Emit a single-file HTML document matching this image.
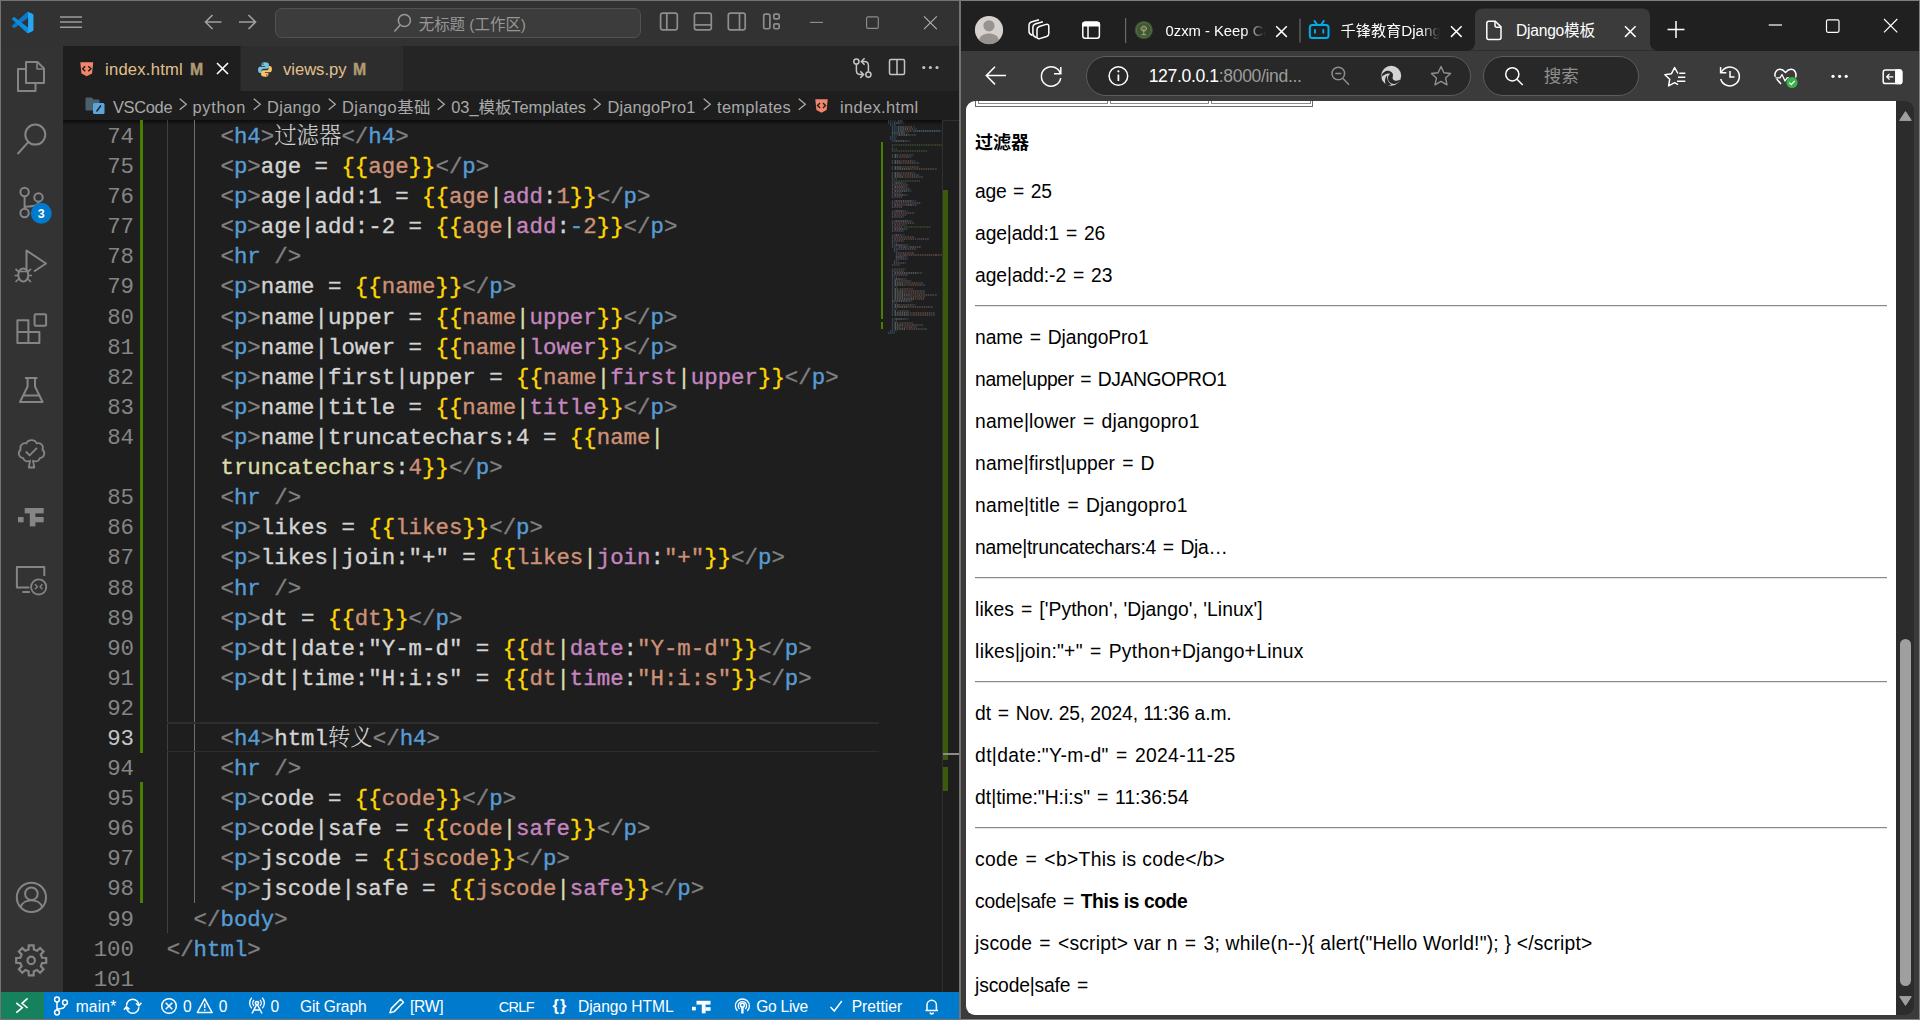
<!DOCTYPE html><html lang="zh-CN"><head><meta charset="utf-8"><title>screenshot</title><style>
*{box-sizing:border-box;margin:0;padding:0}
html,body{width:1920px;height:1020px;overflow:hidden;background:#3b3b3b}
body{position:relative;font-family:"Liberation Sans","Noto Sans CJK SC",sans-serif;}
.abs{position:absolute}
svg{display:block;overflow:visible}
/* ---------- VS Code ---------- */
#vs{position:absolute;left:0;top:0;width:960px;height:1020px;background:#1e1e1e;overflow:hidden}
#vs-title{position:absolute;left:1px;top:1px;width:958px;height:45px;background:#323233}
#vs-act{position:absolute;left:1px;top:46px;width:62px;height:946px;background:#333333}
#vs-tabs{position:absolute;left:63px;top:46px;width:896px;height:45px;background:#252526}
.tab{position:absolute;top:0;height:45px;font-size:16.4px;line-height:47px;color:#e2c08d;white-space:nowrap}
#vs-bc{position:absolute;left:63px;top:91px;width:896px;height:29px;background:#1e1e1e;font-size:16.4px;color:#a9a9a9;white-space:nowrap}
#vs-bc span{position:absolute;top:0;line-height:32px}
#vs-bc .ch{color:#a9a9a9}
#vs-ed{position:absolute;left:63px;top:120px;width:896px;height:872px;background:#1e1e1e;overflow:hidden}
#vs-status{position:absolute;left:1px;top:992px;width:958px;height:27px;background:#007acc;color:#fff;font-size:15.6px;white-space:nowrap}
#vs-status span{position:absolute;top:0;line-height:30px}
.ln{position:absolute;left:0;width:71px;text-align:right;color:#858585;font-family:"Liberation Mono",monospace;white-space:pre}
.cl{position:absolute;white-space:pre;-webkit-text-stroke:0.35px;height:30.1px;font-family:"Liberation Mono","Noto Serif CJK SC",monospace;color:#d4d4d4}
.cj{font-family:"Liberation Mono","Noto Serif CJK SC",monospace;letter-spacing:0;line-height:0;-webkit-text-stroke:0;font-weight:300}
.g{color:#808080}.t{color:#569cd6}.y{color:#ffd700}.v{color:#ce9178}.pp{color:#dcdcaa}.f{color:#c586c0}.w{color:#d4d4d4}
/* ---------- Browser ---------- */
#br{position:absolute;left:961px;top:0;width:959px;height:1020px;background:#3b3b3b;overflow:hidden}
#br-strip{position:absolute;left:0;top:0;width:959px;height:50.6px;background:#202020}
#br-tool{position:absolute;left:0;top:50.6px;width:959px;height:50.4px;background:#3b3b3b}
#doc{position:absolute;left:5px;top:101px;width:930.4px;height:914px;background:#fff;border-radius:9px 0 0 9px;overflow:hidden;color:#000}
#sb{position:absolute;left:935.3px;top:101px;width:18.2px;height:914px;background:#2c2c2c;border-radius:0 9px 9px 0}
#doc p,#doc h4,#doc hr{position:absolute;left:9.1px;white-space:nowrap}
#doc p{font-size:19.3px;line-height:24px;height:24px}
#doc i.q{font-style:normal;margin:0 1.6px}
#doc h4{font-size:18px;line-height:24px;font-weight:bold;font-family:"Liberation Sans","Noto Sans CJK SC",sans-serif}
#doc hr{border:0;border-top:1px solid #8a8a8a;border-left:0;height:2px;width:911.5px;background:none;border-bottom:1px solid #e6e6e6}
</style></head><body>
<div id="vs">
<div class="abs" style="left:0;top:0;width:960px;height:1020px;background:#767272"></div>
<div id="vs-title"></div>
<div id="vs-act"></div>
<div id="vs-tabs"><div class="tab" style="left:0;width:177px;background:#1e1e1e"></div><div class="tab" style="left:178px;width:162px;background:#2d2d2d"></div><svg class="abs" style="left:16.7px;top:15.6px" width="13.51" height="14.475" viewBox="0 0 14 15"><path d="M0.300 0.200h13.400l-1.200 11.700l-5.500 2.900l-5.500-2.900z" fill="#f1866a"/><path d="M5.400 4.300l-2.700 2.700l2.700 2.700M8.600 4.300l2.700 2.700l-2.700 2.700" fill="none" stroke="#1e1e1e" stroke-width="1.500"/></svg><div id="t1" class="tab" style="left:42px;letter-spacing:0.236px;font-size:16.6px">index.html</div><div id="t2" class="tab" style="left:127px;letter-spacing:0.328px;font-size:15.8px;font-weight:bold;color:#b09a74;top:0px;-webkit-text-stroke:0.4px #b09a74">M</div><svg class="abs" style="left:153px;top:16px" width="13" height="13" viewBox="0 0 13 13"><path d="M1 1l11 11M12 1l-11 11" stroke="#fff" stroke-width="1.600" fill="none"/></svg><svg class="abs" style="left:194.5px;top:16px" width="14" height="15" viewBox="0 0 14 15"><path d="M6.900 0.300c-3 0-3.300 1.200-3.300 2.200v1.600h3.500v0.700h-5c-1.600 0-2 1.600-2 3.200s0.500 3 1.900 3h1.300v-1.900c0-1.500 1.100-2.400 2.400-2.400h3.200c1.200 0 2-0.900 2-2v-2.300c0-1.300-1.300-2.100-4-2.100z" fill="#72c4ea"/><path d="M7.100 14.700c3 0 3.300-1.200 3.300-2.200v-1.600h-3.500v-0.700h5c1.600 0 2-1.600 2-3.200s-0.500-3-1.900-3h-1.300v1.900c0 1.500-1.100 2.400-2.400 2.400h-3.200c-1.200 0-2 0.900-2 2v2.300c0 1.300 1.300 2.100 4 2.100z" fill="#f6c66c"/><circle cx="5.100" cy="2" r="0.650" fill="#2d2d2d"/><circle cx="8.900" cy="13" r="0.650" fill="#2d2d2d"/></svg><div id="t3" class="tab" style="left:220px;letter-spacing:-0.018px;font-size:16.6px">views.py</div><div id="t4" class="tab" style="left:290px;letter-spacing:0.328px;font-size:15.8px;font-weight:bold;color:#b09a74;top:0px;-webkit-text-stroke:0.4px #b09a74">M</div><svg class="abs" style="left:0;top:0" width="896" height="45" viewBox="63 46 896 45"><g fill="none" stroke="#c5c5c5" stroke-width="1.500"><circle cx="856.400" cy="61.500" r="2.600"/><circle cx="868.400" cy="74.600" r="2.600"/><path d="M856.400 64.300v6.300c0 3 1.500 4 4 4h3M860.300 71.300l3.300 3.300l-3.300 3.300"/><path d="M868.400 71.800v-6.300c0-3-1.500-4-4-4h-3M864.600 64.800l-3.300-3.300l3.300-3.300"/><rect x="889.500" y="59.400" width="15" height="15" rx="1.500"/><path d="M897 59.400v15"/></g><g fill="#c5c5c5"><circle cx="923.800" cy="67.500" r="1.550"/><circle cx="930.400" cy="67.500" r="1.550"/><circle cx="937" cy="67.500" r="1.550"/></g></svg></div>
<div id="vs-bc"><svg class="abs" style="left:22px;top:6px" width="20" height="18" viewBox="0 0 20 18"><path d="M0.500 1.500a1 1 0 0 1 1-1h5l2 2h5a1 1 0 0 1 1 1v9a1 1 0 0 1-1 1h-12a1 1 0 0 1-1-1z" fill="#4a616c"/><rect x="8" y="6" width="11.500" height="11" rx="1.500" fill="#5aa6dc"/><path d="M11.500 14.500l4.500-6" stroke="#1e1e1e" stroke-width="1.400"/></svg><span id="b0"  style="left:50px;letter-spacing:-0.309px;">VSCode</span><span id="b1"  style="left:129.5px;letter-spacing:0.714px;">python</span><span id="b2"  style="left:204px;letter-spacing:0.341px;">Django</span><span id="b3"  style="left:279px;letter-spacing:0.533px;">Django基础</span><span id="b4"  style="left:388.2px;letter-spacing:-0.003px;">03_模板Templates</span><span id="b5"  style="left:544.5px;letter-spacing:0.142px;">DjangoPro1</span><span id="b6"  style="left:654px;letter-spacing:0.326px;">templates</span><span id="b7"  style="left:777px;letter-spacing:0.380px;">index.html</span><svg class="abs" style="left:115.75px;top:7.200px" width="9" height="14" viewBox="0 0 9 14"><path d="M0.700 0.700l6.600 5.550l-6.600 5.550" fill="none" stroke="#a9a9a9" stroke-width="1.300"/></svg><svg class="abs" style="left:189.9px;top:7.200px" width="9" height="14" viewBox="0 0 9 14"><path d="M0.700 0.700l6.600 5.550l-6.600 5.550" fill="none" stroke="#a9a9a9" stroke-width="1.300"/></svg><svg class="abs" style="left:264.9px;top:7.200px" width="9" height="14" viewBox="0 0 9 14"><path d="M0.700 0.700l6.600 5.550l-6.600 5.550" fill="none" stroke="#a9a9a9" stroke-width="1.300"/></svg><svg class="abs" style="left:374.1px;top:7.200px" width="9" height="14" viewBox="0 0 9 14"><path d="M0.700 0.700l6.600 5.550l-6.600 5.550" fill="none" stroke="#a9a9a9" stroke-width="1.300"/></svg><svg class="abs" style="left:529.9px;top:7.200px" width="9" height="14" viewBox="0 0 9 14"><path d="M0.700 0.700l6.600 5.550l-6.600 5.550" fill="none" stroke="#a9a9a9" stroke-width="1.300"/></svg><svg class="abs" style="left:639.9px;top:7.200px" width="9" height="14" viewBox="0 0 9 14"><path d="M0.700 0.700l6.600 5.550l-6.600 5.550" fill="none" stroke="#a9a9a9" stroke-width="1.300"/></svg><svg class="abs" style="left:735.3px;top:7.200px" width="9" height="14" viewBox="0 0 9 14"><path d="M0.700 0.700l6.600 5.550l-6.600 5.550" fill="none" stroke="#a9a9a9" stroke-width="1.300"/></svg><svg class="abs" style="left:752px;top:7.5px" width="13.02" height="13.95" viewBox="0 0 14 15"><path d="M0.300 0.200h13.400l-1.200 11.700l-5.500 2.900l-5.500-2.900z" fill="#f1866a"/><path d="M5.400 4.300l-2.700 2.700l2.700 2.700M8.600 4.300l2.700 2.700l-2.700 2.700" fill="none" stroke="#1e1e1e" stroke-width="1.500"/></svg></div>
<div id="vs-ed" style="font-size:22.400px;line-height:30.100px"><div class="abs" style="left:0;top:0;width:879px;height:5px;background:linear-gradient(#0c0c0c,rgba(12,12,12,0))"></div><div class="abs" style="left:77px;top:0px;width:3px;height:633px;background:#487e02"></div><div class="abs" style="left:77px;top:662.2px;width:3px;height:120.4px;background:#487e02"></div><div class="abs" style="left:104px;top:0px;width:1px;height:813px;background:#404040"></div><div class="abs" style="left:131px;top:0px;width:1px;height:783px;background:#707070"></div><div class="abs" style="left:104px;top:602.4px;width:712px;height:1.5px;background:#2d2d2d"></div><div class="abs" style="left:104px;top:630.6px;width:712px;height:1.5px;background:#2d2d2d"></div><div class="abs" style="left:818px;top:22px;width:2.4px;height:177px;background:#487e02"></div><div class="abs" style="left:818px;top:202px;width:2.4px;height:7px;background:#487e02"></div><div class="abs" style="left:879px;top:0px;width:1px;height:872px;background:#303030"></div><div class="abs" style="left:879px;top:0px;width:17px;height:1px;background:#303030"></div><div class="abs" style="left:880px;top:69.5px;width:4.8px;height:570px;background:#3a5a0c"></div><div class="abs" style="left:880px;top:646.7px;width:4.8px;height:24.7px;background:#3a5a0c"></div><div class="abs" style="left:880px;top:633px;width:15.5px;height:1.6px;background:#8c8c8c"></div><svg class="abs" style="left:825px;top:0px;overflow:hidden" width="53.5" height="225" viewBox="0 0 53.5 225" fill="none" stroke-width="1.150" stroke-dasharray="1.100 0.700" opacity="0.600"><path stroke="#569cd6" d="M0.0 1.0h8.6M0.0 3.0h4.7M2.0 5.0h4.7M3.9 7.0h4.7M3.9 9.0h4.7M3.9 11.0h4.7M3.9 15.0h5.7M20.6 15.0h6.7M2.0 17.0h5.7M2.0 19.0h4.7M3.9 21.0h2.7M17.6 21.0h3.7M3.9 29.0h2.7M3.9 35.0h1.8M21.6 35.0h2.7M3.9 37.0h1.8M19.6 37.0h2.7M3.9 41.0h1.8M23.5 41.0h2.7M3.9 43.0h1.8M27.4 43.0h2.7M3.9 47.0h1.8M27.4 47.0h2.7M3.9 49.0h1.8M45.1 49.0h2.7M3.9 53.0h1.8M23.5 53.0h2.7M3.9 55.0h1.8M27.4 55.0h2.7M3.9 57.0h1.8M31.4 57.0h2.7M3.9 59.0h2.7M3.9 63.0h2.7M13.7 63.0h3.7M3.9 67.0h1.8M15.7 67.0h2.7M3.9 71.0h1.8M19.6 71.0h2.7M3.9 75.0h1.8M15.7 75.0h2.7M3.9 81.0h2.7M23.5 81.0h3.7M3.9 85.0h1.8M25.5 85.0h2.7M3.9 91.0h2.7M14.7 91.0h3.7M3.9 95.0h1.8M14.7 95.0h2.7M3.9 101.0h2.7M19.6 101.0h3.7M3.9 105.0h1.8M14.7 105.0h2.7M3.9 109.0h1.8M15.7 109.0h2.7M3.9 115.0h2.7M11.8 115.0h3.7M3.9 119.0h1.8M37.2 119.0h2.7M3.9 123.0h2.7M3.9 125.0h2.7M15.7 125.0h3.7M3.9 127.0h5.7M5.9 131.0h2.7M7.8 135.0h2.7M14.7 137.0h3.7M5.9 141.0h3.7M3.9 145.0h6.7M3.9 153.0h1.8M30.4 153.0h2.7M3.9 157.0h2.7M3.9 159.0h2.7M13.7 159.0h3.7M3.9 161.0h1.8M19.6 161.0h2.7M3.9 163.0h1.8M31.4 163.0h2.7M3.9 165.0h1.8M33.3 165.0h2.7M3.9 167.0h2.7M3.9 169.0h1.8M21.6 169.0h2.7M3.9 171.0h1.8M33.3 171.0h2.7M3.9 173.0h1.8M33.3 173.0h2.7M3.9 175.0h1.8M45.1 175.0h2.7M3.9 177.0h1.8M33.3 177.0h2.7M3.9 179.0h1.8M20.6 181.0h2.7M3.9 183.0h2.7M3.9 185.0h1.8M23.5 185.0h2.7M3.9 187.0h1.8M41.2 187.0h2.7M3.9 189.0h2.7M3.9 191.0h1.8M17.6 191.0h2.7M3.9 193.0h1.8M43.1 193.0h2.7M3.9 195.0h1.8M43.1 195.0h2.7M3.9 199.0h2.7M15.7 199.0h3.7M3.9 201.0h2.7M3.9 203.0h1.8M21.6 203.0h2.7M3.9 205.0h1.8M31.4 205.0h2.7M3.9 207.0h1.8M25.5 207.0h2.7M3.9 209.0h1.8M35.3 209.0h2.7M2.0 211.0h5.7M0.0 213.0h5.7"/><path stroke="#9cdcfe" d="M9.8 1.0h4.7M5.9 3.0h4.7M9.8 7.0h7.6M9.8 9.0h10.6M9.8 11.0h4.7M25.5 11.0h7.6M33.3 11.0h19.4M53.9 11.0h3.7M3.9 13.0h9.6M10.8 127.0h6.7M21.6 127.0h5.7"/><path stroke="#ce9178" d="M10.8 3.0h3.7M17.6 7.0h6.7M20.6 9.0h5.7M14.7 11.0h9.6M13.7 35.0h7.6M12.7 37.0h6.7M14.7 41.0h8.6M16.7 43.0h10.6M16.7 47.0h10.6M25.5 49.0h19.4M14.7 53.0h8.6M16.7 55.0h10.6M18.6 57.0h12.5M12.7 85.0h6.7M6.9 95.0h7.6M6.9 105.0h7.6M6.9 119.0h19.4M29.4 119.0h7.6M17.6 127.0h2.7M27.4 127.0h4.7M11.8 135.0h4.7M17.6 135.0h29.2M48.0 135.0h11.6M12.7 161.0h6.7M18.6 163.0h12.5M19.6 165.0h13.5M13.7 169.0h7.6M19.6 171.0h13.5M19.6 173.0h13.5M25.5 175.0h19.4M19.6 177.0h13.5M29.4 179.0h6.7M14.7 185.0h8.6M23.5 187.0h17.4M11.8 191.0h5.7M24.5 193.0h18.4M24.5 195.0h18.4M13.7 203.0h7.6M18.6 205.0h12.5M15.7 207.0h9.6M20.6 209.0h14.5"/><path stroke="#808080" d="M14.7 3.0h0.8M6.9 5.0h0.8M25.5 7.0h1.8M27.4 9.0h1.8M18.6 13.0h1.8M9.8 15.0h0.8M27.4 15.0h0.8M7.8 17.0h0.8M6.9 19.0h0.8M6.9 21.0h0.8M21.6 21.0h0.8M7.8 29.0h1.8M5.9 35.0h0.8M24.5 35.0h0.8M5.9 37.0h0.8M22.5 37.0h0.8M5.9 41.0h0.8M26.5 41.0h0.8M5.9 43.0h0.8M30.4 43.0h0.8M5.9 47.0h0.8M30.4 47.0h0.8M5.9 49.0h0.8M48.0 49.0h0.8M5.9 53.0h0.8M26.5 53.0h0.8M5.9 55.0h0.8M30.4 55.0h0.8M5.9 57.0h0.8M34.3 57.0h0.8M7.8 59.0h1.8M6.9 63.0h0.8M17.6 63.0h0.8M5.9 67.0h0.8M18.6 67.0h0.8M5.9 71.0h0.8M22.5 71.0h0.8M5.9 75.0h0.8M18.6 75.0h0.8M6.9 81.0h0.8M27.4 81.0h0.8M5.9 85.0h0.8M28.4 85.0h0.8M6.9 91.0h0.8M18.6 91.0h0.8M5.9 95.0h0.8M17.6 95.0h0.8M6.9 101.0h0.8M23.5 101.0h0.8M5.9 105.0h0.8M17.6 105.0h0.8M5.9 109.0h0.8M18.6 109.0h0.8M6.9 115.0h0.8M15.7 115.0h0.8M5.9 119.0h0.8M40.2 119.0h0.8M7.8 123.0h1.8M6.9 125.0h0.8M19.6 125.0h0.8M32.3 127.0h0.8M8.8 131.0h0.8M10.8 135.0h0.8M18.6 137.0h0.8M9.8 141.0h0.8M10.8 145.0h0.8M5.9 153.0h0.8M33.3 153.0h0.8M7.8 157.0h1.8M6.9 159.0h0.8M17.6 159.0h0.8M5.9 161.0h0.8M22.5 161.0h0.8M5.9 163.0h0.8M34.3 163.0h0.8M5.9 165.0h0.8M36.3 165.0h0.8M7.8 167.0h1.8M5.9 169.0h0.8M24.5 169.0h0.8M5.9 171.0h0.8M36.3 171.0h0.8M5.9 173.0h0.8M36.3 173.0h0.8M5.9 175.0h0.8M48.0 175.0h0.8M5.9 177.0h0.8M36.3 177.0h0.8M5.9 179.0h0.8M23.5 181.0h0.8M7.8 183.0h1.8M5.9 185.0h0.8M26.5 185.0h0.8M5.9 187.0h0.8M44.1 187.0h0.8M7.8 189.0h1.8M5.9 191.0h0.8M20.6 191.0h0.8M5.9 193.0h0.8M46.1 193.0h0.8M5.9 195.0h0.8M46.1 195.0h0.8M6.9 199.0h0.8M19.6 199.0h0.8M7.8 201.0h1.8M5.9 203.0h0.8M24.5 203.0h0.8M5.9 205.0h0.8M34.3 205.0h0.8M5.9 207.0h0.8M28.4 207.0h0.8M5.9 209.0h0.8M38.2 209.0h0.8M7.8 211.0h0.8M5.9 213.0h0.8"/><path stroke="#d4d4d4" d="M13.7 13.0h3.7M10.8 15.0h9.6M7.8 21.0h9.6M6.9 35.0h3.7M11.8 35.0h0.8M6.9 37.0h2.7M10.8 37.0h0.8M6.9 41.0h4.7M12.7 41.0h0.8M6.9 43.0h6.7M14.7 43.0h0.8M6.9 47.0h6.7M14.7 47.0h0.8M6.9 49.0h15.5M23.5 49.0h0.8M6.9 53.0h4.7M12.7 53.0h0.8M6.9 55.0h6.7M14.7 55.0h0.8M6.9 57.0h8.6M16.7 57.0h0.8M7.8 63.0h5.7M6.9 67.0h8.6M6.9 71.0h12.5M6.9 75.0h8.6M7.8 81.0h15.5M6.9 85.0h5.7M19.6 85.0h5.7M7.8 91.0h6.7M7.8 101.0h11.6M6.9 109.0h8.6M7.8 115.0h3.7M27.4 119.0h0.8M7.8 125.0h7.6M16.7 135.0h0.8M47.0 135.0h0.8M7.8 137.0h6.7M6.9 153.0h23.3M7.8 159.0h5.7M6.9 161.0h2.7M10.8 161.0h0.8M6.9 163.0h8.6M16.7 163.0h0.8M6.9 165.0h9.6M17.6 165.0h0.8M6.9 169.0h3.7M11.8 169.0h0.8M6.9 171.0h9.6M17.6 171.0h0.8M6.9 173.0h9.6M17.6 173.0h0.8M6.9 175.0h15.5M23.5 175.0h0.8M6.9 177.0h9.6M17.6 177.0h0.8M6.9 179.0h19.4M27.4 179.0h0.8M3.9 181.0h16.5M6.9 185.0h4.7M12.7 185.0h0.8M6.9 187.0h13.5M21.6 187.0h0.8M6.9 191.0h1.8M9.8 191.0h0.8M6.9 193.0h14.5M22.5 193.0h0.8M6.9 195.0h14.5M22.5 195.0h0.8M7.8 199.0h7.6M6.9 203.0h3.7M11.8 203.0h0.8M6.9 205.0h8.6M16.7 205.0h0.8M6.9 207.0h5.7M13.7 207.0h0.8M6.9 209.0h10.6M18.6 209.0h0.8"/><path stroke="#6a9955" d="M3.9 25.0h49.8M54.9 25.0h9.6M3.9 27.0h1.8M3.9 31.0h35.1M3.9 61.0h28.2M15.7 107.0h27.2M3.9 149.0h13.5"/><path stroke="#c586c0" d="M3.9 65.0h16.5M3.9 69.0h18.4M3.9 73.0h9.6M3.9 77.0h10.6M3.9 83.0h29.2M3.9 87.0h10.6M3.9 93.0h22.3M3.9 97.0h11.6M3.9 103.0h22.3M3.9 107.0h10.6M3.9 111.0h11.6M3.9 117.0h22.3M3.9 121.0h11.6M5.9 129.0h22.3M7.8 133.0h18.4M7.8 139.0h11.6M5.9 143.0h11.6M3.9 151.0h12.5M3.9 155.0h15.5"/></svg><div class="ln" style="top:1.50px;color:#858585">74</div>
<div class="cl" style="top:1.50px;left:103.74px">    <span class="g">&lt;</span><span class="t">h4</span><span class="g">&gt;</span><span class="cj">过滤器</span><span class="g">&lt;/</span><span class="t">h4</span><span class="g">&gt;</span></div>
<div class="ln" style="top:31.50px;color:#858585">75</div>
<div class="cl" style="top:31.50px;left:103.74px">    <span class="g">&lt;</span><span class="t">p</span><span class="g">&gt;</span>age = <span class="y">{{</span><span class="v">age</span><span class="y">}}</span><span class="g">&lt;/</span><span class="t">p</span><span class="g">&gt;</span></div>
<div class="ln" style="top:61.50px;color:#858585">76</div>
<div class="cl" style="top:61.50px;left:103.74px">    <span class="g">&lt;</span><span class="t">p</span><span class="g">&gt;</span>age|add:1 = <span class="y">{{</span><span class="v">age</span><span class="pp">|</span><span class="f">add</span><span class="w">:</span><span class="v">1</span><span class="y">}}</span><span class="g">&lt;/</span><span class="t">p</span><span class="g">&gt;</span></div>
<div class="ln" style="top:91.50px;color:#858585">77</div>
<div class="cl" style="top:91.50px;left:103.74px">    <span class="g">&lt;</span><span class="t">p</span><span class="g">&gt;</span>age|add:-2 = <span class="y">{{</span><span class="v">age</span><span class="pp">|</span><span class="f">add</span><span class="w">:</span><span class="t">-</span><span class="v">2</span><span class="y">}}</span><span class="g">&lt;/</span><span class="t">p</span><span class="g">&gt;</span></div>
<div class="ln" style="top:121.50px;color:#858585">78</div>
<div class="cl" style="top:121.50px;left:103.74px">    <span class="g">&lt;</span><span class="t">hr</span><span class="g"> /&gt;</span></div>
<div class="ln" style="top:151.50px;color:#858585">79</div>
<div class="cl" style="top:151.50px;left:103.74px">    <span class="g">&lt;</span><span class="t">p</span><span class="g">&gt;</span>name = <span class="y">{{</span><span class="v">name</span><span class="y">}}</span><span class="g">&lt;/</span><span class="t">p</span><span class="g">&gt;</span></div>
<div class="ln" style="top:182.50px;color:#858585">80</div>
<div class="cl" style="top:182.50px;left:103.74px">    <span class="g">&lt;</span><span class="t">p</span><span class="g">&gt;</span>name|upper = <span class="y">{{</span><span class="v">name</span><span class="pp">|</span><span class="f">upper</span><span class="y">}}</span><span class="g">&lt;/</span><span class="t">p</span><span class="g">&gt;</span></div>
<div class="ln" style="top:212.50px;color:#858585">81</div>
<div class="cl" style="top:212.50px;left:103.74px">    <span class="g">&lt;</span><span class="t">p</span><span class="g">&gt;</span>name|lower = <span class="y">{{</span><span class="v">name</span><span class="pp">|</span><span class="f">lower</span><span class="y">}}</span><span class="g">&lt;/</span><span class="t">p</span><span class="g">&gt;</span></div>
<div class="ln" style="top:242.50px;color:#858585">82</div>
<div class="cl" style="top:242.50px;left:103.74px">    <span class="g">&lt;</span><span class="t">p</span><span class="g">&gt;</span>name|first|upper = <span class="y">{{</span><span class="v">name</span><span class="pp">|</span><span class="f">first</span><span class="pp">|</span><span class="f">upper</span><span class="y">}}</span><span class="g">&lt;/</span><span class="t">p</span><span class="g">&gt;</span></div>
<div class="ln" style="top:272.50px;color:#858585">83</div>
<div class="cl" style="top:272.50px;left:103.74px">    <span class="g">&lt;</span><span class="t">p</span><span class="g">&gt;</span>name|title = <span class="y">{{</span><span class="v">name</span><span class="pp">|</span><span class="f">title</span><span class="y">}}</span><span class="g">&lt;/</span><span class="t">p</span><span class="g">&gt;</span></div>
<div class="ln" style="top:302.50px;color:#858585">84</div>
<div class="cl" style="top:302.50px;left:103.74px">    <span class="g">&lt;</span><span class="t">p</span><span class="g">&gt;</span>name|truncatechars:4 = <span class="y">{{</span><span class="v">name</span><span class="pp">|</span></div>
<div class="cl" style="top:332.50px;left:103.74px">    <span class="pp">truncatechars</span><span class="w">:</span><span class="v">4</span><span class="y">}}</span><span class="g">&lt;/</span><span class="t">p</span><span class="g">&gt;</span></div>
<div class="ln" style="top:362.50px;color:#858585">85</div>
<div class="cl" style="top:362.50px;left:103.74px">    <span class="g">&lt;</span><span class="t">hr</span><span class="g"> /&gt;</span></div>
<div class="ln" style="top:392.50px;color:#858585">86</div>
<div class="cl" style="top:392.50px;left:103.74px">    <span class="g">&lt;</span><span class="t">p</span><span class="g">&gt;</span>likes = <span class="y">{{</span><span class="v">likes</span><span class="y">}}</span><span class="g">&lt;/</span><span class="t">p</span><span class="g">&gt;</span></div>
<div class="ln" style="top:422.50px;color:#858585">87</div>
<div class="cl" style="top:422.50px;left:103.74px">    <span class="g">&lt;</span><span class="t">p</span><span class="g">&gt;</span>likes|join:"+" = <span class="y">{{</span><span class="v">likes</span><span class="pp">|</span><span class="f">join</span><span class="w">:</span><span class="v">"+"</span><span class="y">}}</span><span class="g">&lt;/</span><span class="t">p</span><span class="g">&gt;</span></div>
<div class="ln" style="top:453.50px;color:#858585">88</div>
<div class="cl" style="top:453.50px;left:103.74px">    <span class="g">&lt;</span><span class="t">hr</span><span class="g"> /&gt;</span></div>
<div class="ln" style="top:483.50px;color:#858585">89</div>
<div class="cl" style="top:483.50px;left:103.74px">    <span class="g">&lt;</span><span class="t">p</span><span class="g">&gt;</span>dt = <span class="y">{{</span><span class="v">dt</span><span class="y">}}</span><span class="g">&lt;/</span><span class="t">p</span><span class="g">&gt;</span></div>
<div class="ln" style="top:513.50px;color:#858585">90</div>
<div class="cl" style="top:513.50px;left:103.74px">    <span class="g">&lt;</span><span class="t">p</span><span class="g">&gt;</span>dt|date:"Y-m-d" = <span class="y">{{</span><span class="v">dt</span><span class="pp">|</span><span class="f">date</span><span class="w">:</span><span class="v">"Y-m-d"</span><span class="y">}}</span><span class="g">&lt;/</span><span class="t">p</span><span class="g">&gt;</span></div>
<div class="ln" style="top:543.50px;color:#858585">91</div>
<div class="cl" style="top:543.50px;left:103.74px">    <span class="g">&lt;</span><span class="t">p</span><span class="g">&gt;</span>dt|time:"H:i:s" = <span class="y">{{</span><span class="v">dt</span><span class="pp">|</span><span class="f">time</span><span class="w">:</span><span class="v">"H:i:s"</span><span class="y">}}</span><span class="g">&lt;/</span><span class="t">p</span><span class="g">&gt;</span></div>
<div class="ln" style="top:573.50px;color:#858585">92</div>
<div class="ln" style="top:603.50px;color:#c6c6c6">93</div>
<div class="cl" style="top:603.50px;left:103.74px">    <span class="g">&lt;</span><span class="t">h4</span><span class="g">&gt;</span>html<span class="cj">转义</span><span class="g">&lt;/</span><span class="t">h4</span><span class="g">&gt;</span></div>
<div class="ln" style="top:633.50px;color:#858585">94</div>
<div class="cl" style="top:633.50px;left:103.74px">    <span class="g">&lt;</span><span class="t">hr</span><span class="g"> /&gt;</span></div>
<div class="ln" style="top:663.50px;color:#858585">95</div>
<div class="cl" style="top:663.50px;left:103.74px">    <span class="g">&lt;</span><span class="t">p</span><span class="g">&gt;</span>code = <span class="y">{{</span><span class="v">code</span><span class="y">}}</span><span class="g">&lt;/</span><span class="t">p</span><span class="g">&gt;</span></div>
<div class="ln" style="top:693.50px;color:#858585">96</div>
<div class="cl" style="top:693.50px;left:103.74px">    <span class="g">&lt;</span><span class="t">p</span><span class="g">&gt;</span>code|safe = <span class="y">{{</span><span class="v">code</span><span class="pp">|</span><span class="f">safe</span><span class="y">}}</span><span class="g">&lt;/</span><span class="t">p</span><span class="g">&gt;</span></div>
<div class="ln" style="top:723.50px;color:#858585">97</div>
<div class="cl" style="top:723.50px;left:103.74px">    <span class="g">&lt;</span><span class="t">p</span><span class="g">&gt;</span>jscode = <span class="y">{{</span><span class="v">jscode</span><span class="y">}}</span><span class="g">&lt;/</span><span class="t">p</span><span class="g">&gt;</span></div>
<div class="ln" style="top:753.50px;color:#858585">98</div>
<div class="cl" style="top:753.50px;left:103.74px">    <span class="g">&lt;</span><span class="t">p</span><span class="g">&gt;</span>jscode|safe = <span class="y">{{</span><span class="v">jscode</span><span class="pp">|</span><span class="f">safe</span><span class="y">}}</span><span class="g">&lt;/</span><span class="t">p</span><span class="g">&gt;</span></div>
<div class="ln" style="top:784.50px;color:#858585">99</div>
<div class="cl" style="top:784.50px;left:103.74px">  <span class="g">&lt;/</span><span class="t">body</span><span class="g">&gt;</span></div>
<div class="ln" style="top:814.50px;color:#858585">100</div>
<div class="cl" style="top:814.50px;left:103.74px"><span class="g">&lt;/</span><span class="t">html</span><span class="g">&gt;</span></div>
<div class="ln" style="top:844.50px;color:#858585">101</div></div>
<div id="vs-status"><div class="abs" style="left:0;top:0;width:43px;height:27px;background:#16825d"></div><span id="s0"  style="left:74.7px;letter-spacing:0.185px;">main*</span><span id="s1"  style="left:182px;letter-spacing:0.312px;">0</span><span id="s2"  style="left:217.7px;letter-spacing:0.312px;">0</span><span id="s3"  style="left:269.5px;letter-spacing:0.515px;">0</span><span id="s4"  style="left:299px;letter-spacing:-0.123px;">Git Graph</span><span id="s5"  style="left:409px;letter-spacing:-0.219px;">[RW]</span><span id="s6"  style="left:497.7px;letter-spacing:-0.644px;font-size:14.5px">CRLF</span><span id="s7"  style="left:577px;letter-spacing:-0.064px;">Django HTML</span><span id="s8"  style="left:755.2px;letter-spacing:-0.279px;">Go Live</span><span id="s9"  style="left:850.7px;letter-spacing:0.029px;">Prettier</span><svg class="abs" style="left:-1px;top:-992px" width="960" height="1020" viewBox="0 0 960 1020"><g fill="none" stroke="#ffffff" stroke-width="1.500" stroke-linecap="butt"><path d="M16.300 1003l6 4.700l-6 4.900M27.600 998.400l-5.600 4.900l5.600 4.700" stroke-width="1.600"/><circle cx="57" cy="999.500" r="2.400"/><circle cx="57" cy="1012.500" r="2.400"/><circle cx="65" cy="1002.500" r="2.400"/><path d="M57 1002v8M65 1005c0 3.500-3 3.500-7.500 4"/><path d="M126.600 1005.400a6.100 6.100 0 0 1 12.200 0M138.800 1007.200a6.100 6.100 0 0 1-12.200 0"/><path d="M136 1003.200l2.900 2.700l2.500-3.100M129.400 1009.400l-2.900-2.700l-2.500 3.100"/><circle cx="169" cy="1006" r="7.300"/><path d="M165.700 1002.700l6.600 6.600M172.300 1002.700l-6.600 6.600"/><path d="M204.700 998.800l7.400 13.700h-14.800z" stroke-linejoin="round"/><path d="M204.700 1003.500v4.500M204.700 1009.300v1.500"/><path d="M257 1004l-5 9.500M257 1004l5 9.500M253.800 1010h6.400"/><circle cx="257" cy="1003" r="1.600"/><path d="M254 1000a4.300 4.300 0 0 0 0 6M260 1000a4.300 4.300 0 0 1 0 6M251.800 997.800a7.300 7.300 0 0 0 0 10.400M262.200 997.800a7.300 7.300 0 0 1 0 10.400" stroke-width="1.300"/><path d="M390 1012.800l1.200-4.200l9.300-9.300l3 3l-9.300 9.300z" stroke-linejoin="round"/></g><text x="552.500" y="1011" font-family="Liberation Sans,sans-serif" font-size="16.500" font-weight="bold" fill="#fff" letter-spacing="1.200">{}</text><g fill="#fff"><rect x="696.500" y="1000.800" width="14" height="3.800"/><rect x="701.800" y="1004" width="3.800" height="9.300"/><rect x="705.400" y="1007.200" width="5.200" height="3.600"/><rect x="692" y="1006.800" width="3.800" height="3.600"/></g><g fill="none" stroke="#fff" stroke-width="1.500"><circle cx="742.400" cy="1005.200" r="1.900"/><path d="M742.400 1007v6.500" stroke-width="2.400"/><path d="M739.600 1009a4.200 4.200 0 1 1 5.600 0M737.500 1011a7 7 0 1 1 9.800 0" stroke-width="1.300"/><path d="M830.500 1007l3.800 4l7.500-10"/><path d="M925.500 1010.500h12.500M927 1010.500v-5.500a4.700 4.700 0 0 1 9.400 0v5.500M930 1012.500a1.800 1.800 0 0 0 3.500 0"/></g></svg></div>
<div class="abs" style="left:275px;top:8px;width:366px;height:30px;background:#3c3c3c;border:1px solid #525252;border-radius:7px"></div><div id="tt"  style="left:418.7px;letter-spacing:-0.038px;position:absolute;top:9.5px;height:30px;line-height:30px;font-size:15.5px;color:#969696;white-space:nowrap">无标题 (工作区)</div><svg class="abs" style="left:0;top:0" width="960" height="46" viewBox="0 0 960 46"><g fill="none" stroke="#c5c5c5" stroke-width="1.6" stroke-linecap="butt" stroke-linejoin="miter"><path d="M60 17h22M60 22h22M60 27.300h22" stroke-width="1.500" stroke="#9c9c9c"/><path d="M221.500 22h-16M212.500 15l-7 7l7 7" stroke="#a0a0a0"/><path d="M239 22h16M248.500 15l7 7l-7 7" stroke="#a0a0a0"/><g stroke="#8e8e8e" stroke-width="1.700"><rect x="660.600" y="13.050" width="16.700" height="16.900" rx="2.200"/><path d="M666.800 13v17"/><rect x="694.400" y="13.050" width="16.900" height="16.900" rx="2.200"/><path d="M694.400 24.900h16.900"/><rect x="728.300" y="13.050" width="16.900" height="16.900" rx="2.200"/><path d="M739.500 13v17"/><rect x="763.700" y="14.050" width="6.200" height="14.700" rx="1.600"/><rect x="773.800" y="14.050" width="5.400" height="4.900" rx="1.400"/><rect x="773.800" y="23.850" width="5.400" height="4.900" rx="1.400"/></g><g stroke="#8c8c8c" stroke-width="1.150"><path d="M810 22.400h13"/><rect x="866.600" y="16.800" width="11.700" height="11.500" rx="1.400"/><path d="M924 16.300l12.800 12.800M936.800 16.300l-12.800 12.800" stroke="#b0b0b0"/></g><circle cx="404.400" cy="20.500" r="6" stroke="#9a9a9a" stroke-width="1.500"/><path d="M400 25.200l-5.600 6.400" stroke="#9a9a9a" stroke-width="1.500"/></g><g transform="translate(12 11.800) scale(0.2145)"><path d="M96.461 10.796 75.857.876a6.230 6.230 0 0 0-7.107 1.207l-67.451 61.500a4.167 4.167 0 0 0 .004 6.162l5.510 5.009a4.167 4.167 0 0 0 5.320.236l81.228-61.620c2.725-2.067 6.639-.124 6.639 3.297v-.24a6.250 6.250 0 0 0-3.539-5.630z" fill="#0a78c6"/><path d="m96.461 89.204-20.604 9.920a6.229 6.229 0 0 1-7.107-1.207l-67.451-61.500a4.167 4.167 0 0 1 .004-6.162l5.510-5.009a4.167 4.167 0 0 1 5.320-.236l81.228 61.620c2.725 2.067 6.639.124 6.639-3.297v.240a6.250 6.250 0 0 1-3.539 5.630z" fill="#0b8bdd"/><path d="M75.858 99.126a6.232 6.232 0 0 1-7.108-1.210c2.306 2.307 6.250.674 6.250-2.588V4.672c0-3.262-3.944-4.895-6.250-2.589a6.232 6.232 0 0 1 7.108-1.210l20.600 9.908A6.250 6.250 0 0 1 100 16.413v67.174a6.250 6.250 0 0 1-3.541 5.633l-20.601 9.906z" fill="#25a7f5"/></g></svg>
<svg class="abs" style="left:0;top:0" width="64" height="1020" viewBox="0 0 64 1020"><g fill="none" stroke="#858585" stroke-width="2" stroke-linejoin="round" stroke-linecap="butt"><path d="M26 62h11.5l6.5 6.5v14.5h-18z"/><path d="M37 62.5v6.5h6.5" stroke-width="1.6"/><path d="M26 69h-8v22h17.5v-8"/><circle cx="35.3" cy="134.6" r="10"/><path d="M28.2 142.2L17.6 154"/><circle cx="24.6" cy="192" r="4.2"/><circle cx="24.6" cy="213" r="4.2"/><circle cx="38.5" cy="197.4" r="4.2"/><path d="M24.6 196.2v12.6M38.5 201.6c0 5-6 4.5-13.9 5.2" /><path d="M26.5 270v-19.5l19.5 13-12 8"/><ellipse cx="23.3" cy="275" rx="5" ry="6.6"/><path d="M18.6 271.5h9.4M15.5 269l3 2.5M31 269l-3 2.5M14.6 275.5h3.6M28.4 275.5h3.6M15.5 282l3-2.8M31 282l-3-2.8" stroke-width="1.7"/><path d="M17.4 320.2h11v11.8h11v11h-22zM28.4 332v11M17.4 332h11" /><rect x="34.6" y="314.2" width="11.5" height="11.5" rx="1"/><path d="M25 378h12.4M27.6 378v8.5l-7.6 15.5h22.6l-7.6-15.5v-8.5M23.2 395.4h16"/><path d="M28.8 467.5l1.3-6.8c-3.5 1.6-6.6 0-6.8-2.6c-4.6-.4-6-5.600-2.700-8.400c-1.300-4.600 2.700-7.400 5.800-6.200c1.500-4.600 8.800-4.600 10.300 0c3.400-1.200 7.400 1.600 5.800 6.200c3.300 2.800 1.900 8-2.700 8.400c-.2 2.600-3.300 4.200-6.800 2.600l1.300 6.800z" stroke-width="1.8"/><path d="M25.800 451.500l3.800 3.800l7.400-7.400" stroke-width="1.8"/><path d="M44.300 576v-9h-27.400v20.600h12.500M22.400 592h7.400"/><circle cx="38.700" cy="586.900" r="7.600" stroke-width="1.8"/><path d="M35 584.300l2.400 2.500l-2.400 2.500M42.400 584.300l-2.400 2.500l2.400 2.500" stroke-width="1.4"/><circle cx="31.400" cy="897.400" r="14.600"/><circle cx="31.400" cy="893.700" r="6.300"/><path d="M20.600 907.300c2.500-9.300 19.100-9.300 21.600 0"/></g><g fill="#858585"><rect x="24.700" y="508" width="19" height="5.400"/><rect x="29.800" y="513" width="5.600" height="13.400"/><rect x="35" y="517" width="8.700" height="5.300"/><rect x="18" y="517" width="5.600" height="5.300"/></g><path d="M28.54 949.52L28.78 945.39L33.62 945.39L33.86 949.52L37.01 950.82L40.10 948.08L43.52 951.50L40.78 954.59L42.08 957.74L46.21 957.98L46.21 962.82L42.08 963.06L40.78 966.21L43.52 969.30L40.10 972.72L37.01 969.98L33.86 971.28L33.62 975.41L28.78 975.41L28.54 971.28L25.39 969.98L22.30 972.72L18.88 969.30L21.62 966.21L20.32 963.06L16.19 962.82L16.19 957.98L20.32 957.74L21.62 954.59L18.88 951.50L22.30 948.08L25.39 950.82Z" fill="none" stroke="#858585" stroke-width="2.200" stroke-linejoin="miter"/><circle cx="31.2" cy="960.4" r="3.700" fill="none" stroke="#858585" stroke-width="2.200"/><circle cx="41.300" cy="213.300" r="10.500" fill="#007acc"/><text x="41.300" y="218" text-anchor="middle" font-family="Liberation Sans,sans-serif" font-weight="bold" font-size="12.500" fill="#fff">3</text></svg>
</div>
<div class="abs" style="left:959px;top:0;width:2px;height:1020px;background:#767272"></div>
<div id="br"><div id="br-strip"></div><div id="br-tool"></div><div class="abs" style="left:0;top:0;width:959px;height:1px;background:#7d7d7d"></div><svg class="abs" style="left:0;top:0" width="959" height="52" viewBox="961 0 959 52"><path d="M1467 50.600c5 0 8-3 8-8v-26c0-5 3-8 8-8h159c5 0 8 3 8 8v26c0 5 3 8 8 8z" fill="#3b3b3b"/></svg><div class="abs" style="left:125.3px;top:56.300px;width:385px;height:39.300px;border-radius:20px;background:#282828;border:1px solid #5d5d5d"></div><div class="abs" style="left:521.5px;top:56.300px;width:156.500px;height:39.300px;border-radius:20px;background:#282828;border:1px solid #5d5d5d"></div><div class="abs" style="left:204.5px;top:18.700px;width:100px;height:24px;line-height:24px;font-size:14.800px;color:#fff;white-space:nowrap;overflow:hidden;-webkit-mask-image:linear-gradient(90deg,#000 78%,transparent 100%);mask-image:linear-gradient(90deg,#000 78%,transparent 100%)">0zxm - Keep Calm</div><div class="abs" style="left:379.5px;top:18.700px;width:99px;height:24px;line-height:24px;font-size:15.200px;color:#fff;white-space:nowrap;overflow:hidden;-webkit-mask-image:linear-gradient(90deg,#000 80%,transparent 100%);mask-image:linear-gradient(90deg,#000 80%,transparent 100%)">千锋教育Django</div><div id="bt3" class="abs" style="left:555px;top:18.700px;height:24px;line-height:24px;font-size:15.600px;color:#fff;white-space:nowrap;letter-spacing:-0.232px">Django模板</div><div id="url" class="abs" style="left:187.7px;top:62px;height:28px;line-height:28px;font-size:17.600px;color:#fff;white-space:nowrap;letter-spacing:-0.366px">127.0.0.1<span style="color:#9c9c9c">:8000/ind...</span></div><div class="abs" style="left:582.7px;top:62px;height:28px;line-height:28px;font-size:17.500px;color:#8f8f8f;white-space:nowrap">搜索</div><div id="doc"><div class="abs" style="left:8.800px;top:-20px;width:338.500px;height:26px;border:1px solid #6a6a6a"></div><div class="abs" style="left:12.1px;top:-20px;width:129.7px;height:23px;border:1px solid #8a8a8a"></div><div class="abs" style="left:144px;top:-20px;width:98.6px;height:23px;border:1px solid #8a8a8a"></div><div class="abs" style="left:245.2px;top:-20px;width:99.6px;height:23px;border:1px solid #8a8a8a"></div><h4 style="top:29.5px">过滤器</h4><p id="pq0" style="top:79.1px;word-spacing:0px;letter-spacing:-0.289px">age <i class="q">=</i> 25</p><p id="pq1" style="top:121.1px;word-spacing:0px;letter-spacing:-0.148px">age|add:1 <i class="q">=</i> 26</p><p id="pq2" style="top:163.1px;word-spacing:0px;letter-spacing:-0.085px">age|add:-2 <i class="q">=</i> 23</p><hr style="top:204px"><p id="pq4" style="top:225.1px;word-spacing:0px;letter-spacing:-0.103px">name <i class="q">=</i> DjangoPro1</p><p id="pq5" style="top:267.1px;word-spacing:0px;letter-spacing:-0.396px">name|upper <i class="q">=</i> DJANGOPRO1</p><p id="pq6" style="top:309.1px;word-spacing:0px;letter-spacing:0.153px">name|lower <i class="q">=</i> djangopro1</p><p id="pq7" style="top:351.1px;word-spacing:0px;letter-spacing:0.088px">name|first|upper <i class="q">=</i> D</p><p id="pq8" style="top:393.1px;word-spacing:0px;letter-spacing:0.191px">name|title <i class="q">=</i> Djangopro1</p><p id="pq9" style="top:435.1px;word-spacing:0px;letter-spacing:-0.261px">name|truncatechars:4 <i class="q">=</i> Dja…</p><hr style="top:476px"><p id="pq11" style="top:497.1px;word-spacing:0px;letter-spacing:0.062px">likes <i class="q">=</i> ['Python', 'Django', 'Linux']</p><p id="pq12" style="top:539.1px;word-spacing:0px;letter-spacing:0.269px">likes|join:"+" <i class="q">=</i> Python+Django+Linux</p><hr style="top:580px"><p id="pq14" style="top:601.1px;word-spacing:0px;letter-spacing:-0.126px">dt <i class="q">=</i> Nov. 25, 2024, 11:36 a.m.</p><p id="pq15" style="top:643.1px;word-spacing:0px;letter-spacing:0.348px">dt|date:"Y-m-d" <i class="q">=</i> 2024-11-25</p><p id="pq16" style="top:685.1px;word-spacing:0px;letter-spacing:-0.016px">dt|time:"H:i:s" <i class="q">=</i> 11:36:54</p><hr style="top:726px"><p id="pq18" style="top:747.1px;word-spacing:0px;letter-spacing:0.323px">code <i class="q">=</i> &lt;b&gt;This is code&lt;/b&gt;</p><p style="top:789.1px;word-spacing:0px"><span id="pq19a" style="letter-spacing:-0.237px">code|safe <i class="q">=</i> </span><b id="pq19b" style="letter-spacing:-0.403px">This is code</b></p><p id="pq20" style="top:831.1px;word-spacing:0px;letter-spacing:0.211px">jscode <i class="q">=</i> &lt;script&gt; var n <i class="q">=</i> 3; while(n--){ alert("Hello World!"); } &lt;/script&gt;</p><p id="pq21" style="top:873.1px;word-spacing:0px;letter-spacing:-0.186px">jscode|safe <i class="q">=</i></p></div><div id="sb"><div class="abs" style="left:3.500px;top:538px;width:11.400px;height:347px;border-radius:5.600px;background:#9f9f9f"></div></div><div class="abs" style="left:958px;top:0;width:1px;height:1020px;background:#808080"></div><div class="abs" style="left:0;top:1019px;width:959px;height:1px;background:#808080"></div><svg class="abs" style="left:0;top:0;z-index:5" width="959" height="1020" viewBox="961 0 959 1020"><g fill="none" stroke="#ffffff" stroke-width="1.500" stroke-linecap="butt" stroke-linejoin="round"><path d="M1032.500 35.500c-2.500-1-3.500-2-3.500-4v-6.500c0-1.500 0.800-2.500 2.200-3l7.800-2.300"/><path d="M1036.500 37.800c-2.500-1-3.600-2.200-3.600-4v-6.800c0-1.500 0.800-2.500 2.200-3l7.800-2.300"/><path d="M1037 29.500c0-1.500 0.800-2.500 2.200-3l7-2.100c1.600-0.500 2.600 0.300 2.600 1.800v7.300c0 1.500-0.800 2.500-2.200 3l-7 2.100c-1.600 0.500-2.600-0.300-2.600-1.800z"/><rect x="1082.800" y="22.200" width="16.600" height="16" rx="2.500"/><path d="M1088 26v12"/><path d="M1082.800 25.800h16.600v-1.300a2.300 2.300 0 0 0-2.300-2.300h-12a2.300 2.300 0 0 0-2.300 2.300z" fill="#fff"/><path d="M1125.600 18v25M1300 18.700v23.800" stroke="#6a6a6a" stroke-width="1.200"/><path d="M1276.2 26.300l10.600 10.600M1286.8 26.300l-10.600 10.600" stroke-width="1.500"/><path d="M1451 26.300l10.600 10.600M1461.6 26.300l-10.600 10.600" stroke-width="1.500"/><path d="M1625 26.300l10.600 10.600M1635.6 26.300l-10.600 10.600" stroke-width="1.500"/><path d="M1486.800 23.200a2 2 0 0 1 2-2h6.500l5.700 5.700v10.600a2 2 0 0 1-2 2h-10.200a2 2 0 0 1-2-2z"/><path d="M1495 21.500v4a1.700 1.700 0 0 0 1.700 1.700h4"/><path d="M1667.500 29.500h17M1676 21v17"/><path d="M1768.700 25h13.300" stroke-width="1.200"/><rect x="1826.500" y="19.800" width="12.500" height="12.500" rx="1.500" stroke-width="1.200"/><path d="M1884 19l13.300 13.300M1897.300 19l-13.300 13.300" stroke-width="1.200"/><path d="M1006 75.600h-19M995 66.800l-8.700 8.800l8.700 8.800" stroke-linejoin="miter"/><path d="M1060.500 74a9.700 9.700 0 1 0 0.200 4"/><path d="M1060.800 67v6.800h-6.800" stroke-linejoin="miter"/><circle cx="1118.400" cy="76" r="9.300"/><path d="M1118.400 74.500v6.500" stroke-width="1.700"/><circle cx="1118.400" cy="71.300" r="1.100" fill="#fff" stroke="none"/><g stroke="#8d8d8d"><circle cx="1338.300" cy="73.500" r="6.300"/><path d="M1343 78.500l6 6.300M1335.300 73.500h6"/></g><path d="M1441 66.500l2.900 6.200l6.700 0.800l-5 4.600l1.400 6.700l-6-3.400l-6 3.400l1.400-6.700l-5-4.600l6.700-0.800z" stroke="#909090" stroke-width="1.400"/><circle cx="1512.300" cy="74.300" r="6.600"/><path d="M1517 79.300l5.700 5.700"/><path d="M1677.900 73.500l-3.300-6l-3.100 6.200l-6.600 1l4.800 4.600l-1.100 6.600l6-3.200l3.500 1.900"/><path d="M1679.300 73.200h6M1678 77.200h7.300M1677 81.300h8.300" stroke-width="1.400"/><path d="M1721.200 72.500a9.500 9.500 0 1 1-0.500 6.500"/><path d="M1720.600 67v5.800h5.800M1730 71v6h4.500" stroke-linejoin="miter"/><path d="M1781 84l-4.300-5M1795.500 77.500c1.500-3.500-0.500-8.200-4.400-8.200c-2.300 0-4 1.300-5.600 3.200c-1.600-1.900-3.300-3.200-5.600-3.200c-3.900 0-5.800 4.200-4.600 7.500"/><path d="M1775.500 77.800h4.500l2-3.300l3 6.500l2-3.200h2" stroke-width="1.300"/><rect x="1883.200" y="70" width="18.500" height="13.600" rx="2.200"/><path d="M1895.800 70h3.700a2.200 2.200 0 0 1 2.200 2.200v9.200a2.200 2.200 0 0 1-2.200 2.200h-3.700z" fill="#fff"/><path d="M1893.300 76.800h-6.300M1889.500 74l-2.800 2.800l2.800 2.800" stroke-width="1.300"/></g><g fill="#fff"><circle cx="1833" cy="76.300" r="1.600"/><circle cx="1839.600" cy="76.300" r="1.600"/><circle cx="1846.200" cy="76.300" r="1.600"/></g><circle cx="1792" cy="82.500" r="5.600" fill="#3cb14a"/><path d="M1789.300 82.600l2 2l3.400-3.700" fill="none" stroke="#fff" stroke-width="1.300"/><circle cx="989" cy="30" r="14.100" fill="#d5d2ce"/><circle cx="989" cy="25.800" r="5.600" fill="#989390"/><path d="M979.200 40.200c0.500-8.800 19.100-8.800 19.600 0a14.100 14.100 0 0 1-19.600 0z" fill="#989390"/><circle cx="1143.800" cy="30" r="9.100" fill="#3d5636"/><circle cx="1143.800" cy="30" r="7.400" fill="none" stroke="#66794a" stroke-width="0.700"/><path d="M1143.800 34.500v-4.500M1141 28.700c0-3.400 5.600-3.400 5.600 0c0 1.700-1.600 2.500-2.800 2.100c-1.200 0.400-2.800-0.400-2.800-2.100zM1141.300 34.700h5" fill="#8f9660" fill-opacity="0.500" stroke="#b5b07c" stroke-width="0.900"/><g fill="none" stroke="#00aeec" stroke-width="2" stroke-linecap="round"><rect x="1309.800" y="25" width="18.700" height="13" rx="2.500"/><path d="M1314.500 21l2.500 3.500M1323.800 21l-2.500 3.500" /><path d="M1315 30v2.800M1323.300 30v2.800" stroke-width="1.900"/></g><g transform="translate(1391.200 75.800)"><circle r="10" fill="#d3d3d3"/><path d="M-9.800 1.500c0.500-5 4.500-7.300 8-6.300c3 0.800 4.200 3.300 3.400 5.600c-0.500 1.500-0.300 2.800 1.200 3.600c2 1 5 0.600 6.800-0.900c-0.800 2.200-3 4.300-6.200 4.600c-4 0.300-7-2.600-6.600-6.400c0.200-1.700 1.100-3 2.300-3.800c-3.400-0.800-6.800 1.300-8.900 3.600z" fill="#282828"/><path d="M-5.500 8.400c-1.300-3.200-0.800-7 1.500-9c-0.600 3.400 0.800 7.300 4.200 9.500c-2 0.700-4.200 0.400-5.700-0.500z" fill="#282828"/></g><path d="M1905.500 111.600l5.800 8.800h-11.600z" fill="#9f9f9f" stroke="#9f9f9f" stroke-width="1" stroke-linejoin="round"/><path d="M1905.500 1005.400l5.800-8.800h-11.600z" fill="#9f9f9f" stroke="#9f9f9f" stroke-width="1" stroke-linejoin="round"/></svg></div>
</body></html>
